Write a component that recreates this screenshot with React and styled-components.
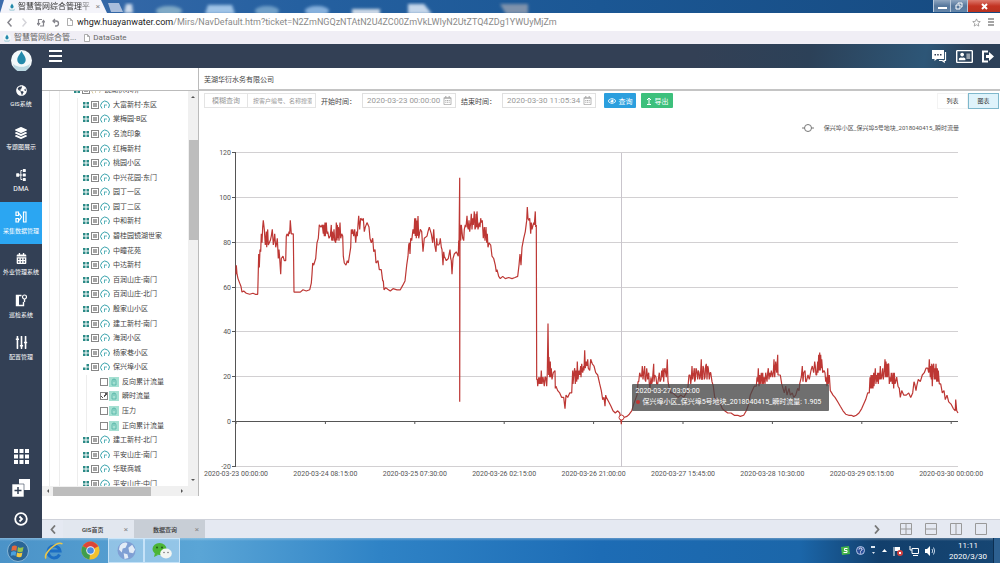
import React, { useState } from "react";
import styled, { createGlobalStyle, css } from "styled-components";
import {
  FaGlobeAmericas,
  FaLayerGroup,
  FaSitemap,
  FaCalendarAlt,
  FaSlidersH,
  FaRegAddressCard,
  FaRegCalendarAlt,
  FaRegEye,
} from "react-icons/fa";

const GlobalStyle = createGlobalStyle`
  * { box-sizing: border-box; }
  body {
    margin: 0;
    background: #fff;
    font-family: Roboto, "Noto Sans CJK SC", sans-serif;
    font-size: 7px;
    color: #444;
  }
  button, input, select {
    font-family: inherit;
    font-size: inherit;
    color: inherit;
    margin: 0;
    padding: 0;
    border: 0;
    background: none;
  }
  svg { display: block; flex: none; }
`;

const Page = styled.div`
  display: flex;
  flex-direction: column;
  height: 100vh;
  overflow: hidden;
`;

/* ---------- browser ---------- */

const TitleBar = styled.div`
  position: relative;
  display: flex;
  align-items: stretch;
  height: 13px;
  overflow: hidden;
  background: linear-gradient(90deg, #3c6cab 0%, #2560a0 30%, #1b5794 60%, #164a80 100%);
`;

const Wallpaper = styled.svg`
  position: absolute;
  left: 106px;
  top: 0;
`;

const BrowserTab = styled.div`
  display: flex;
  align-items: center;
  gap: 2px;
  width: 107px;
  padding: 0 7px 0 8px;
  font-size: 8px;
  color: #333;
  background: #f4f4fa;
  clip-path: polygon(0 100%, 4px 0, 101px 0, 100% 100%);
`;

const TabTitle = styled.span`
  flex: 1;
  white-space: nowrap;
  line-height: 13px;
  mask-image: linear-gradient(90deg, #000 80%, rgba(0, 0, 0, 0.3));
`;

const TabClose = styled.button`
  font-size: 8px;
  line-height: 8px;
  color: #888;
`;

const WindowButtons = styled.div`
  position: relative;
  display: flex;
  margin-left: auto;
  height: 12px;
`;

const WindowButton = styled.button`
  display: flex;
  align-items: center;
  justify-content: center;
  width: ${({ $close }) => ($close ? "33px" : "17px")};
  background: ${({ $close }) =>
    $close
      ? "linear-gradient(#dd7a6d, #c33423 50%, #b93220)"
      : "linear-gradient(#8fa6c0, #56779c 50%, #6485a8)"};
  border-left: 1px solid #b8c8da;
`;

const AddressBar = styled.div`
  display: flex;
  align-items: center;
  height: 18px;
  padding: 0 6px 0 7px;
  background: #fff;
  color: #777;
`;

const NavButton = styled.button`
  display: flex;
  width: 15px;
  color: ${({ disabled }) => (disabled ? "#d5d5da" : "#85858c")};
`;

const Url = styled.div`
  flex: 1;
  margin-left: 4px;
  font-size: 9px;
  line-height: 16px;
  color: #8a8a8a;
  white-space: nowrap;
  b {
    font-weight: 400;
    color: #222;
  }
`;

const BarIcon = styled.button`
  display: flex;
  margin-left: 7px;
  color: #888;
`;

const BookmarkBar = styled.div`
  display: flex;
  align-items: center;
  gap: 8px;
  height: 13px;
  padding-left: 3px;
  background: #f0eef5;
`;

const Bookmark = styled.a`
  display: flex;
  align-items: center;
  gap: 3px;
  font-size: 8px;
  line-height: 13px;
  color: #666;
  text-decoration: none;
`;

/* ---------- application ---------- */

const AppShell = styled.div`
  display: flex;
  flex: 1;
  min-height: 0;
`;

const Sidebar = styled.nav`
  display: flex;
  flex-direction: column;
  width: 42px;
  background: #334055;
  color: #fff;
`;

const Logo = styled.div`
  display: flex;
  align-items: center;
  justify-content: center;
  height: 32px;
`;

const MenuItem = styled.button`
  display: flex;
  flex-direction: column;
  align-items: center;
  justify-content: center;
  gap: 4px;
  height: 42px;
  padding-bottom: 1px;
  color: #fff;
  font-size: ${({ $latin }) => ($latin ? "7px" : "6px")};
  line-height: 8px;
  white-space: nowrap;
  ${({ $active }) =>
    $active &&
    css`
      background: #2ba6f2;
    `}
`;

const SidebarTools = styled.div`
  display: flex;
  flex-direction: column;
  align-items: center;
  gap: 15px;
  margin-top: auto;
  padding-bottom: 12px;
`;

const ToolButton = styled.button`
  display: flex;
  color: #fff;
`;

const Main = styled.div`
  display: flex;
  flex: 1;
  flex-direction: column;
  min-width: 0;
`;

const Header = styled.header`
  display: flex;
  align-items: center;
  gap: 9px;
  height: 24px;
  padding: 0 6px 0 7px;
  color: #fff;
  background: linear-gradient(100deg, #334055 68%, #2c4158 80%, #2d5677 92%, #2c4058 97%);
`;

const Spacer = styled.span`
  flex: 1;
`;

const Workspace = styled.div`
  display: flex;
  flex: 1;
  min-height: 0;
`;

const TreePanel = styled.aside`
  display: flex;
  flex-direction: column;
  width: 157px;
  margin-bottom: 23px;
  border-right: 1px solid #bbb;
`;

const TreeHead = styled.div`
  height: 23px;
  border-bottom: 1px solid #bbb;
`;

const TreeBody = styled.div`
  display: flex;
  flex: 1;
  min-height: 0;
`;

const TreeClip = styled.div`
  display: flex;
  flex: 1;
  min-width: 0;
  overflow: hidden;
`;

const TreeList = styled.ul`
  display: flex;
  flex: 1;
  flex-direction: column;
  margin: -8px 0 -5px;
  padding: 0;
  list-style: none;
`;

const TreeRow = styled.li`
  display: flex;
  flex: 1;
  align-items: center;
  white-space: nowrap;
`;

const Guide = styled.span`
  align-self: stretch;
  width: ${({ $width }) => $width}px;
  border-right: 1px solid ${({ $clear }) => ($clear ? "transparent" : "#ededed")};
`;

const Toggle = styled.button`
  display: flex;
  width: 8px;
`;

const NodeLabel = styled.label`
  display: flex;
  align-items: center;
  gap: 1px;
  line-height: 10px;
  span {
    margin-left: 2px;
  }
`;

const CheckBox = styled.input`
  appearance: none;
  width: 8px;
  height: 8px;
  flex: none;
  border: 1px solid #888;
  background: ${({ $partial }) => ($partial ? "#a5a5a5" : "#fff")};
  ${({ $partial }) =>
    $partial &&
    css`
      box-shadow: inset 0 0 0 1px #fff;
    `}
  &:checked {
    background: no-repeat center / 6px 6px
      conic-gradient(from 20deg at 40% 85%, #555 0 30deg, #fff 0 270deg, #555 0 300deg, #fff 0);
  }
`;

const VScroll = styled.div`
  display: flex;
  flex-direction: column;
  align-items: center;
  justify-content: space-between;
  width: 10px;
  padding: 4px 0;
  background: #f0f0f0;
`;

const VThumb = styled.div`
  width: 9px;
  height: 100px;
  margin: 41px 0 auto;
  background: #bdbdbd;
`;

const HScroll = styled.div`
  display: flex;
  align-items: center;
  height: 10px;
  padding: 0 14px 0 4px;
  background: #f0f0f0;
`;

const HThumb = styled.div`
  width: 98px;
  height: 9px;
  margin: 0 auto 0 3px;
  background: #bdbdbd;
`;

const Content = styled.main`
  flex: 1;
  min-width: 0;
`;

const CompanyName = styled.h1`
  height: 23px;
  margin: 0;
  padding-left: 5px;
  border-bottom: 2px solid #c4c4c4;
  font-size: 7px;
  font-weight: 400;
  line-height: 24px;
  color: #444;
`;

const Toolbar = styled.div`
  display: flex;
  align-items: center;
  height: 21px;
  padding: 0 1px 2px 5px;
`;

const KindSelect = styled.select`
  appearance: none;
  width: 44px;
  height: 15px;
  padding: 0 7px;
  border: 1px solid #e4e4e4;
  color: #999;
`;

const KeywordInput = styled.input`
  width: 68px;
  height: 15px;
  padding: 0 3px 0 5px;
  border: 1px solid #e4e4e4;
  border-left: 0;
  font-size: 6px;
  &::placeholder {
    color: #999;
  }
`;

const FieldLabel = styled.label`
  width: 41px;
  margin-left: 5px;
  white-space: nowrap;
`;

const DateField = styled.div`
  display: flex;
  align-items: center;
  width: 94px;
  height: 15px;
  padding: 0 3px 0 4px;
  border: 1px solid #e0e0e0;
  color: #aaa;
  input {
    flex: 1;
    min-width: 0;
    font-size: 8px;
    color: #999;
  }
`;

const ActionButton = styled.button`
  display: flex;
  align-items: center;
  justify-content: center;
  gap: 3px;
  width: 32px;
  height: 15px;
  margin-left: ${({ $first }) => ($first ? "8px" : "5px")};
  border-radius: 1px;
  color: #fff;
  background: ${({ $color }) => $color};
`;

const ViewButton = styled.button`
  width: 31px;
  height: 16px;
  font-size: 6px;
  color: #333;
  border: 1px solid ${({ $active }) => ($active ? "#7fb8cc" : "#f3f3f3")};
  background: ${({ $active }) => ($active ? "#dff3fb" : "#fff")};
`;

const ChartBox = styled.div`
  position: relative;
`;

const ChartSvg = styled.svg`
  width: 100%;
  height: auto;
  text {
    font-size: 7px;
    fill: #555;
  }
`;

const Tooltip = styled.div`
  position: absolute;
  left: 54%;
  top: 68%;
  padding: 2px 8px 3px 4px;
  border-radius: 1px;
  line-height: 11px;
  white-space: nowrap;
  color: #fff;
  background: rgba(70, 70, 70, 0.78);
`;

const SeriesDot = styled.span`
  display: inline-block;
  width: 4px;
  height: 4px;
  margin-right: 3px;
  border-radius: 50%;
  background: #c23531;
`;

const PageTabs = styled.footer`
  display: flex;
  align-items: center;
  height: 19px;
  padding-right: 13px;
  border-top: 1px solid #cfd2da;
  background: #e5e9f2;
  color: #777;
`;

const TabArrow = styled.button`
  display: flex;
  justify-content: center;
  width: 21px;
`;

const PageTab = styled.div`
  display: flex;
  align-items: center;
  align-self: stretch;
  width: 71px;
  padding: 0 6px 0 19px;
  background: ${({ $active }) => ($active ? "#c8ced6" : "#e2e7ef")};
`;

const TabName = styled.button`
  color: #333;
  font-size: 6px;
  font-weight: 500;
  white-space: nowrap;
`;

const TabRemove = styled.button`
  margin-left: auto;
  font-size: 8px;
  color: #888;
`;

const LayoutButton = styled.button`
  display: flex;
  margin-left: 13px;
`;

/* ---------- task bar ---------- */

const TaskBar = styled.div`
  display: flex;
  align-items: stretch;
  height: 25px;
  color: #fff;
  background:
    linear-gradient(rgba(255, 255, 255, 0.3), transparent 3px),
    linear-gradient(90deg, #4b93c8 0%, #5aa5d6 20%, #2f83c6 38%, #1d6cb5 60%, #1b66a9 80%, #123f6c 88%, #164673 100%);
`;

const TaskButton = styled.button`
  display: flex;
  align-items: center;
  justify-content: center;
  width: 36px;
  ${({ $open }) =>
    $open &&
    css`
      border: 1px solid rgba(220, 240, 255, 0.7);
      background: rgba(220, 240, 255, 0.45);
    `}
`;

const Tray = styled.div`
  display: flex;
  align-items: center;
  gap: 6px;
  margin-left: auto;
`;

const Clock = styled.time`
  width: 42px;
  margin: 0 5px 0 6px;
  font-size: 8px;
  line-height: 11px;
  text-align: center;
`;

const ShowDesktop = styled.button`
  align-self: stretch;
  width: 7px;
  margin-left: -7px;
  border-left: 1px solid #0c2f52;
  background: #2d6090;
`;

/* ---------- data ---------- */

const nodes = [
  "大富新村-东区",
  "棠梅园-B区",
  "名流印象",
  "红梅新村",
  "桃园小区",
  "中兴花园-东门",
  "园丁一区",
  "园丁二区",
  "中和新村",
  "碧桂园镜湖世家",
  "中疃花苑",
  "中达新村",
  "百润山庄-南门",
  "百润山庄-北门",
  "殷家山小区",
  "建工新村-南门",
  "海润小区",
  "杨家巷小区",
  {
    name: "保兴埠小区",
    children: ["反向累计流量", "瞬时流量", "压力", "正向累计流量"],
  },
  "建工新村-北门",
  "平安山庄-南门",
  "华联商城",
  "平安山庄-中门",
];

const SERIES = "保兴埠小区_保兴埠5号地块_2018040415_瞬时流量";

const xLabels = [
  "2020-03-23 00:00:00",
  "2020-03-24 08:15:00",
  "2020-03-25 07:30:00",
  "2020-03-26 02:15:00",
  "2020-03-26 21:00:00",
  "2020-03-27 15:45:00",
  "2020-03-28 10:30:00",
  "2020-03-29 05:15:00",
  "2020-03-30 00:00:00",
];

// samples as "position value" pairs, each block counts from its own offset
const blocks = [
  {
    offset: -107,
    data: `107 66 108 70 110 66 113 64 118 62 122 60.5 125 58 130 58.5 138 57.5 148 57 158 57.5 165 57 172 57
    173 62 175 75 177 69 179 77 181 76 183 84 185 80 187 87 189 90 192 86 195 79 198 85 199 78 202 86 204 79
    210 81 213 83 216 86 219 79 221 81 223 84 226 78 229 80 231 82 234 73 236 77 238 73 241 66 243 73 248 74 252 72 256 72
    258 83 260 84 264 83 266 85 268 84 270 90 273 84 279 84 281 58 290 58 300 58 308 59 318 58.5 328 59 333 62 335 66
    337 71 340 70 346 73 350 80 354 82 357 88 362 87 366 88 369 84 370 88 372 83 374 89 375 83 378 89 380 84 382 85
    386 82 390 83 393 88 394 81 396 85 398 81 401 86 403 81 406 80 408 89 410 81 411 88 413 82 414 87 416 81 419 89
    421 82 424 84 427 83 429 74 432 71 437 70 441 72 444 71 448 75 451 78 453 86 455 84 457 86 460 83 463 86 466 80
    469 85 471 83 473 88 475 92 478 86 481 91 486 90 489 91 492 85 495 87 500 89 506 87 509 82 513 80 517 82 520 76
    524 77 527 71 533 72 537 68 543 68 547 63 549 63 551 59 556 60 562 59.3 570 58.5 578 59.5 590 59 600 59 607 61
    614 63 619 70 623 74 625 79 627 80 629 75 631 82 634 81 638 86 641 84 643 91 645 83 646 91 648 82 650 90 651 83
    653 92 655 82 660 86 664 85 668 76 672 82 680 83 683 85 687 87 693 84 697 80 700 86 703 79 707 76 709 82 711 79
    715 79 718 80`,
  },
  {
    offset: 613,
    data: `0 82 3 78 5 77 8 70 10 76 12 74 18 72 24 73 29 77 31 73 33 72 35 66 38 73 42 75 48 76 54 74 55 81 56 78
    58 109 58 9 59 88 61 81 63 88 67 82 70 81 72 86 75 88 77 87 80 92 82 87 84 86 86 90 88 85 91 89 93 93 95 86
    97 91 99 88 102 94 104 86 106 87 107 93 109 87 110 94 113 86 117 89 119 87 121 91 123 89 126 90 129 82 132 87
    134 81 137 87 139 80 141 84 143 78 146 80 151 79 155 74 160 73 165 70 168 67 170 68 175 65 180 64 187 65 195 64
    205 64.5 215 64 224 64.5 232 65 236 70 239 75 242 70 245 78 250 82 255 85 259 90 261 96 263 91 265 90 268 91
    271 84 273 89 275 86 280 89 282 88 285 94 286 87 288 88 289 19 291 19 292 16 295 20 297 17 299 20 301 17 303 23
    305 17 308 20 312 16 314 20 316 20 319 16 321 22 323 44 325 21 326 29 328 20 330 27 331 20 333 24 335 19 339 22
    344 23 345 15 347 16 352 14 358 13 364 11 370 11 374 6 377 12 382 11 388 13 394 13 397 23 398 17 401 22 403 24
    405 17 407 23 409 18 411 27 413 19 416 23 418 21 421 25 422 20 424 26 427 22 430 25 431 23 433 32 435 24 438 27
    440 25 442 28 444 24 448 23 451 28 456 26 461 25 466 22 472 21 478 17 483 14 487 10 491 11 494 7 496 12 498 11
    505 9 512 7 518 5 525 4 532 5 538 4 541 2 543 -1 545 3`,
  },
  {
    offset: 1123,
    data: `35 2 40 2 50 2.5 57 3.5 64 5 70 8 75 10 80 12 83 18 85 18 88 22 92 20 94 21 96 25 98 19 100 22 103 25 104 19
    106 18 109 24 112 19 115 22 117 17 119 15 122 20 124 17 126 18 130 26 131 18 133 21 137 20 139 17 142 17 147 22
    149 18 152 19 154 23 156 20 158 24 160 18 162 23 164 24 168 20 171 28 173 18 177 15 181 13 187 13 195 12 203 11
    212 12 220 11 228 13 231 13 233 16 236 21 239 21 241 17 243 19 245 25 247 19 250 22 252 24 253 18 255 19 257 24
    259 23 262 19 264 23 266 22 268 19 270 20 273 28 274 19 276 19 278 25 280 24 282 19 284 20 286 25 288 26 290 19
    292 25 294 24 297 19 299 22 301 22 305 18 309 16 313 11 318 10 324 9 331 8 336 6 343 5 352 4 362 4 372 3 382 3
    390 2.5 400 3 408 5 413 7 420 12 426 14 432 16 438 16 440 20 442 18 444 24 446 16 448 21 450 17 453 22 455 17
    457 22 459 17 461 20 464 17 466 22 470 18 472 22 474 24 476 19 478 22 481 20 483 23 487 20 489 22 491 28 493 20
    496 27 499 22 502 30 503 21 505 21 510 21 514 17 518 15 522 13 526 16 530 12 536 15 540 12 546 13 550 11 556 12
    562 15 566 14 568 17 573 20 576 25 578 18 580 22 584 23 586 18 588 18 593 21 597 19 602 23 606 25 610 22 613 27
    615 25 617 21 619 21 622 27 623 22 625 30 627 23 628 31 630 23 631 30 633 24 634 28 637 22 641 23 644 22 646 18
    648 20 650 16 652 24 654 17 657 21 660 14 664 13 668 12 674 11 682 9 690 7 698 5 706 3.5 715 3 723 3 730 2.5
    738 3 746 4 754 6 760 8 766 10 772 13 777 13 779 20 781 15 782 21 784 15 786 21 788 15 790 22 791 16 793 20
    795 24 797 17 798 21 800 18 802 22 804 17 806 22 808 19 810 25 812 19 814 20 817 24 819 19 821 21 824 28 826 20
    827 27 829 20 830 26 832 20 834 26 835 26 837 17 839 20 841 18 843 22 846 17 848 22 850 15 852 22 854 17 856 18
    859 20 863 16 867 15 870 11 874 14 880 12 888 12 895 13 901 11 907 13 911 18 913 17 917 14 919 16 924 19 930 18
    936 21 942 22 947 24 952 24 955 22 957 28 960 20 961 25 963 19 964 26 966 16 968 25 970 26 972 19 973 24 975 19
    977 26 979 18 981 24 983 18 984 23 987 17 991 17 996 13 1001 14 1005 10 1010 12 1015 9 1022 8 1029 6 1035 5
    1036 10 1039 5 1043 4`,
  },
];

const PLOT = { left: 37, right: 759, zero: 310, unit: 2.24 };
const toY = (value) => PLOT.zero - value * PLOT.unit;

const linePoints = blocks
  .map(({ offset, data }) => {
    const n = data.trim().split(/\s+/).map(Number);
    const out = [];
    for (let i = 0; i < n.length; i += 2) {
      const x = PLOT.left + (n[i] + offset) / 3;
      out.push(`${x.toFixed(1)},${toY(n[i + 1]).toFixed(1)}`);
    }
    return out.join(" ");
  })
  .join(" ");

/* ---------- icons ---------- */

const DropIcon = ({ size }) => (
  <svg width={size} height={size} viewBox="0 0 20 20">
    <circle cx="10" cy="10" r="10" fill="#f3f8fa" />
    <path d="M2 13a8 8 0 0 0 16 0c-4 4-12 4-16 0z" fill="#bcd9e3" />
    <path d="M10 1c2 4 4 5.500 4 8.500a4 4 0 0 1-8 0C6 6.500 8 5 10 1z" fill="#2389ab" />
  </svg>
);

const FileIcon = () => (
  <svg width="6" height="8" viewBox="0 0 6 8" fill="#fff" stroke="#999">
    <path d="M.5.5h3l2 2v5h-5z M3.500 .5v2h2" strokeWidth=".8" />
  </svg>
);

const DataIcon = () => (
  <svg width="12" height="12" viewBox="0 0 12 12" fill="none" stroke="#fff" strokeWidth="1.200">
    <path d="M1 1h2.500v3.500H1z M1 7.500h2.500V11H1z M3.500 2.500c2 0 2 3.500 3.500 3.500-1.500 0-1.500 3.500-3.500 3.500M8.500 1H11v10H8.500z" />
  </svg>
);

const PatrolIcon = () => (
  <svg width="12" height="13" viewBox="0 0 12 13" fill="none" stroke="#fff">
    <path d="M6.500 1.500h-5v10h7V8" strokeWidth="1.400" />
    <path d="M1 1h3v11H1z" fill="#fff" strokeWidth="0" />
    <circle cx="9.500" cy="3" r="2" strokeWidth="1.200" />
    <path d="M9.500 5v3" strokeWidth="1.400" />
  </svg>
);

const ExitIcon = () => (
  <svg width="12" height="13" viewBox="0 0 12 13">
    <path d="M6 1.500H1v10h5" fill="none" stroke="#fff" strokeWidth="2" />
    <path d="M4 5h3V2l5 4.500L7 11V8H4z" fill="#fff" />
  </svg>
);

const ClusterIcon = ({ open }) => (
  <svg width="6" height="6" viewBox="0 0 6 6" fill="#2b8a86">
    {!open && <path d="M0 0h2.500v2.500H0z" />}
    <path d="M3.500 0H6v2.500H3.500z M0 3.500h2.500V6H0z M3.500 3.500H6V6H3.500z" />
  </svg>
);

const GaugeIcon = ({ color = "#3aa3ac" }) => (
  <svg width="10" height="10" viewBox="0 0 10 10" fill="none" stroke={color}>
    <path d="M2 8.500A4.300 4.300 0 1 1 8.500 8" />
    <path d="M4 5h3M4.500 5v3" strokeWidth=".8" />
  </svg>
);

const MeterIcon = () => (
  <svg width="10" height="10" viewBox="0 0 10 10">
    <path d="M0 0h10v10H0z" fill="#a5e0d2" />
    <path d="M3 8V4a2 2 0 0 1 4 0v4z M5 2v3" fill="none" stroke="#4fb3a5" strokeWidth=".8" />
  </svg>
);

const LayoutIcon = ({ d }) => (
  <svg width="12" height="12" viewBox="0 0 12 12" fill="none" stroke="#999">
    <path d={`M.5.5h11v11H.5z ${d}`} />
  </svg>
);

const Arrow = ({ d }) => (
  <svg width="4" height="4" viewBox="0 0 4 4" fill="#555">
    <path d={d} />
  </svg>
);

const ChromeIcon = () => (
  <svg width="19" height="19" viewBox="0 0 20 20">
    <circle cx="10" cy="10" r="9.500" fill="#f2c12e" />
    <path d="M10 10L1.800 5.200A9.500 9.500 0 0 1 18.200 5.500z" fill="#dc4437" />
    <path d="M10 10L1.800 5.200a9.500 9.500 0 0 0 7 14.200z" fill="#3f9d4b" />
    <circle cx="10" cy="10" r="4.500" fill="#f5f5f5" />
    <circle cx="10" cy="10" r="3.500" fill="#4a8ce0" />
  </svg>
);

const WindowsIcon = () => (
  <svg width="22" height="22" viewBox="0 0 22 22">
    <circle cx="11" cy="11" r="10.500" fill="#2a6596" stroke="#86b5d6" />
    <path d="M5 6.500c2-1.200 3.500-1.200 5 0L9.300 11c-1.500-1-3-1-5 0z" fill="#e4683a" />
    <path d="M11 7c2 1.200 3.500 1 5.500 0l-.8 4.500c-2 1-3.700 1-5.400 0z" fill="#96c34a" />
    <path d="M4.200 12c2-1 3.500-1 5 0l-.7 4c-1.500-1-3-1-4.800 0z" fill="#4ba1dc" />
    <path d="M10 12.500c2 1 3.500 1 5.400 0l-.8 4c-2 1.200-3.500 1-5.200 0z" fill="#f3c73f" />
  </svg>
);

const IeIcon = () => (
  <svg width="20" height="20" viewBox="0 0 20 20" fill="none">
    <path d="M15.500 13.500A6 6 0 1 1 16 10H6" stroke="#1d6fc4" strokeWidth="3" />
    <path d="M2 17.500C-1 13 13-1 18.500 3" stroke="#e9c54a" strokeWidth="1.500" />
  </svg>
);

const GlobeIcon = () => (
  <svg width="19" height="19" viewBox="0 0 20 20">
    <circle cx="10" cy="10" r="9.500" fill="#7f9fd4" />
    <path d="M3 5c3-4 7-4 8-2l-2 4-3 1-1 4-3-3zM12 7l4-3 3 5-2 4-4-1zM7 13l4 1 1 4-4 1z" fill="#e3ecf7" />
  </svg>
);

const WechatIcon = () => (
  <svg width="20" height="18" viewBox="0 0 20 18">
    <ellipse cx="7.500" cy="7" rx="7" ry="6" fill="#4cb536" />
    <path d="M3 11l-1 4 4-2z" fill="#4cb536" />
    <ellipse cx="14" cy="11.500" rx="5.800" ry="5" fill="#f2f5f2" />
    <circle cx="5" cy="5.500" r="1" fill="#23591a" />
    <circle cx="10" cy="5.500" r="1" fill="#23591a" />
    <circle cx="12" cy="10.500" r=".8" fill="#777" />
    <circle cx="16" cy="10.500" r=".8" fill="#777" />
  </svg>
);

const TreeMapIcon = styled(FaSitemap)`
  transform: rotate(-90deg);
`;

const SlidersIcon = styled(FaSlidersH)`
  transform: rotate(90deg);
`;

const menu = [
  { label: "GIS系统", icon: <FaGlobeAmericas size={11} /> },
  { label: "专题图展示", icon: <FaLayerGroup size={12} /> },
  { label: "DMA", icon: <TreeMapIcon size={12} />, latin: true },
  { label: "采集数据管理", icon: <DataIcon />, active: true },
  { label: "外业管理系统", icon: <FaCalendarAlt size={11} /> },
  { label: "巡检系统", icon: <PatrolIcon /> },
  { label: "配置管理", icon: <SlidersIcon size={13} /> },
];

/* ---------- parts ---------- */

const Browser = () => (
  <>
    <TitleBar>
      <Wallpaper width="600" height="13" viewBox="0 0 600 13">
        <defs>
          <filter id="soft">
            <feGaussianBlur stdDeviation="1.500" />
          </filter>
        </defs>
        <path d="M2 3h11l4 9H5z" fill="#a9bddb" />
        <g filter="url(#soft)">
          <path d="M18 13l2-9h6l1 9z" fill="#cfdcec" />
          <ellipse cx="63" cy="11" rx="13" ry="5" fill="#7fa9c6" />
          <path d="M99 14l3-9h24l3 9z" fill="#9fc3e6" />
          <ellipse cx="161" cy="11" rx="12" ry="5" fill="#6f9fc8" />
          <ellipse cx="211" cy="11" rx="12" ry="5" fill="#86b0dc" />
          <path d="M246 9h28v6h-28z" fill="#cdd9e6" />
          <path d="M302 4h16l8 10h-24z" fill="#c4d6ea" />
          <path d="M394 4h28v10h-22z" fill="#7e92ac" />
        </g>
      </Wallpaper>
      <BrowserTab>
        <DropIcon size={8} />
        <TabTitle>智慧管网综合管理平</TabTitle>
        <TabClose aria-label="关闭标签页">×</TabClose>
      </BrowserTab>
      <WindowButtons>
        <WindowButton aria-label="最小化">
          <svg width="9" height="8"><path d="M0 5h9v2H0z" fill="#fff" /></svg>
        </WindowButton>
        <WindowButton aria-label="还原">
          <svg width="8" height="8" fill="none" stroke="#fff"><path d="M3 2V1h4v4H6M1 3h4v4H1z" /></svg>
        </WindowButton>
        <WindowButton $close aria-label="关闭">
          <svg width="7" height="7" stroke="#fff" strokeWidth="2"><path d="M1 1l5 5M6 1L1 6" /></svg>
        </WindowButton>
      </WindowButtons>
    </TitleBar>
    <AddressBar>
      <NavButton aria-label="后退">
        <svg width="5" height="9" fill="none" stroke="currentColor" strokeWidth="1.500"><path d="M4.500 .5L1 4.500l3.500 4" /></svg>
      </NavButton>
      <NavButton disabled aria-label="前进">
        <svg width="5" height="9" fill="none" stroke="currentColor" strokeWidth="1.500"><path d="M.5.5L4 4.500l-3.500 4" /></svg>
      </NavButton>
      <NavButton aria-label="刷新">
        <svg width="8" height="9" fill="none" stroke="currentColor" strokeWidth="1.200"><path d="M5 1.500H1.500V6M0 5l1.500 2L3 5M3 8h3.500V3M5 4.500l1.500-2 1.500 2" /></svg>
      </NavButton>
      <NavButton aria-label="撤销">
        <svg width="8" height="9" fill="none" stroke="currentColor" strokeWidth="1.300"><path d="M3 1L1 3l2 2M1 3h3a2.500 2.500 0 0 1 0 5H3" /></svg>
      </NavButton>
      <FileIcon />
      <Url>
        <b>whgw.huayanwater.com</b>/Mirs/NavDefault.htm?ticket=N2ZmNGQzNTAtN2U4ZC00ZmVkLWIyN2UtZTQ4ZDg1YWUyMjZm
      </Url>
      <BarIcon aria-label="收藏">
        <svg width="9" height="9" viewBox="0 0 10 10" fill="none" stroke="currentColor" strokeWidth=".8"><path d="M5 1l1.200 2.700 3 .3-2.300 2 .7 3L5 7.500 2.400 9l.7-3L.8 4l3-.3z" /></svg>
      </BarIcon>
      <BarIcon aria-label="菜单">
        <svg width="6" height="8" stroke="currentColor" strokeWidth="1.400"><path d="M0 1h6M0 4h6M0 7h6" /></svg>
      </BarIcon>
    </AddressBar>
    <BookmarkBar>
      <Bookmark href="#home">
        <DropIcon size={8} />
        智慧管网综合管...
      </Bookmark>
      <Bookmark href="#datagate">
        <FileIcon />
        DataGate
      </Bookmark>
    </BookmarkBar>
  </>
);

const Tree = () => {
  const [checked, setChecked] = useState(["瞬时流量"]);

  const toggle = (name) => {
    setChecked(checked.includes(name) ? checked.filter((c) => c !== name) : [...checked, name]);
  };

  return (
    <TreeList>
      <TreeRow>
        <Guide $width={8} />
        <Guide $width={10} />
        <Guide $width={14} $clear />
        <Toggle aria-label="镜湖供水所"><ClusterIcon /></Toggle>
        <NodeLabel>
          <CheckBox type="checkbox" $partial />
          <GaugeIcon color="#d8c9a0" />
          <span>镜湖供水所</span>
        </NodeLabel>
      </TreeRow>
      {nodes.map((node) => {
        const name = node.name || node;
        return (
          <React.Fragment key={name}>
            <TreeRow>
              <Guide $width={8} />
              <Guide $width={10} />
              <Guide $width={18} />
              <Guide $width={5} $clear />
              <Toggle aria-label={name}><ClusterIcon open={!!node.children} /></Toggle>
              <NodeLabel>
                <CheckBox type="checkbox" $partial />
                <GaugeIcon />
                <span>{name}</span>
              </NodeLabel>
            </TreeRow>
            {node.children &&
              node.children.map((child) => (
                <TreeRow key={child}>
                  <Guide $width={8} />
                  <Guide $width={10} />
                  <Guide $width={18} />
                  <Guide $width={9} />
                  <Guide $width={13} $clear />
                  <NodeLabel>
                    <CheckBox
                      type="checkbox"
                      checked={checked.includes(child)}
                      onChange={() => toggle(child)}
                    />
                    <MeterIcon />
                    <span>{child}</span>
                  </NodeLabel>
                </TreeRow>
              ))}
          </React.Fragment>
        );
      })}
    </TreeList>
  );
};

const Chart = () => (
  <ChartBox>
    <ChartSvg viewBox="0 0 801 400">
      <path d="M603 16h12" stroke="#777" />
      <circle cx="609" cy="16" r="3.500" fill="#fff" stroke="#777" />
      <text x="760" y="18" textAnchor="end" style={{ fontSize: 6 }}>{SERIES}</text>
      {[120, 100, 80, 60, 40, 20, 0, -20].map((v) => (
        <g key={v}>
          <path
            d={`M${PLOT.left} ${Math.round(toY(v)) - 0.5}H${PLOT.right}`}
            stroke={v === 0 ? "#555" : "#d2d0d2"}
          />
          <path d={`M${PLOT.left - 4} ${Math.round(toY(v)) - 0.5}h4`} stroke="#555" />
          <text x={PLOT.left - 5} y={Math.round(toY(v)) + 2} textAnchor="end">{v}</text>
        </g>
      ))}
      <path d="M36.500 41V355" stroke="#555" />
      {xLabels.map((label, i) => {
        const x = PLOT.left + i * 89.4;
        return (
          <g key={label}>
            <path d={`M${x} 310v2`} stroke="#555" />
            <text x={x} y="364" textAnchor="middle">{label}</text>
          </g>
        );
      })}
      <path d="M422.500 41V355" stroke="#c9c5cc" />
      <polyline points={linePoints} fill="none" stroke="#bd3734" strokeWidth="1.200" strokeLinejoin="bevel" />
      <circle cx="422.500" cy="305.500" r="2.500" fill="#fff" stroke="#c23531" />
    </ChartSvg>
    <Tooltip>
      2020-03-27 03:05:00
      <br />
      <SeriesDot />
      {SERIES}: 1.905
    </Tooltip>
  </ChartBox>
);

const App = () => {
  const [view, setView] = useState("图表");

  return (
    <Page>
      <GlobalStyle />
      <Browser />
      <AppShell>
        <Sidebar>
          <Logo><DropIcon size={21} /></Logo>
          {menu.map((item) => (
            <MenuItem key={item.label} $active={item.active} $latin={item.latin}>
              {item.icon}
              {item.label}
            </MenuItem>
          ))}
          <SidebarTools>
            <ToolButton aria-label="应用">
              <svg width="15" height="15" fill="currentColor">
                <path d="M0 0h4v4H0zM5.500 0h4v4h-4zM11 0h4v4h-4zM0 5.500h4v4H0zM5.500 5.500h4v4h-4zM11 5.500h4v4h-4zM0 11h4v4H0zM5.500 11h4v4h-4zM11 11h4v4h-4z" />
              </svg>
            </ToolButton>
            <ToolButton aria-label="新增窗口">
              <svg width="18" height="18">
                <path d="M7 0h11v11H7z" fill="#fff" />
                <path d="M0 5h12v13H0z" fill="#fff" stroke="#334055" strokeWidth=".6" />
                <path d="M6 8v7M2.500 11.500h7" stroke="#334055" strokeWidth="1.500" />
              </svg>
            </ToolButton>
            <ToolButton aria-label="展开">
              <svg width="14" height="14" fill="none" stroke="currentColor" strokeWidth="1.800">
                <circle cx="7" cy="7" r="5.800" />
                <path d="M5.500 4.500L8 7 5.500 9.500" />
              </svg>
            </ToolButton>
          </SidebarTools>
        </Sidebar>
        <Main>
          <Header>
            <ToolButton aria-label="菜单">
              <svg width="13" height="12" fill="currentColor"><path d="M0 0h13v2H0zM0 5h13v2H0zM0 10h13v2H0z" /></svg>
            </ToolButton>
            <Spacer />
            <ToolButton aria-label="消息">
              <svg width="15" height="14" viewBox="0 0 15 14">
                <path d="M0 1h12v9H5l-2.500 2V10H0z" fill="#fff" />
                <path d="M13.500 3v8.500h-1.300v1.500l-2-1.500H7" fill="none" stroke="#fff" strokeWidth="1.200" />
                <path d="M2.500 5h1.500v1.500H2.500zM5.200 5h1.500v1.500H5.200zM8 5h1.500v1.500H8z" fill="#334055" />
              </svg>
            </ToolButton>
            <ToolButton aria-label="用户"><FaRegAddressCard size={17} /></ToolButton>
            <ToolButton aria-label="退出"><ExitIcon /></ToolButton>
          </Header>
          <Workspace>
            <TreePanel>
              <TreeHead />
              <TreeBody>
                <TreeClip><Tree /></TreeClip>
                <VScroll>
                  <Arrow d="M0 3h4L2 1z" />
                  <VThumb />
                  <Arrow d="M0 1h4L2 3z" />
                </VScroll>
              </TreeBody>
              <HScroll>
                <Arrow d="M3 0v4L1 2z" />
                <HThumb />
                <Arrow d="M1 0v4l2-2z" />
              </HScroll>
            </TreePanel>
            <Content>
              <CompanyName>芜湖华衍水务有限公司</CompanyName>
              <Toolbar>
                <KindSelect aria-label="查询方式" defaultValue="模糊查询">
                  <option>模糊查询</option>
                </KindSelect>
                <KeywordInput aria-label="关键字" placeholder="按客户编号、名称搜索" />
                <FieldLabel htmlFor="start">开始时间：</FieldLabel>
                <DateField>
                  <input id="start" defaultValue="2020-03-23 00:00:00" />
                  <FaRegCalendarAlt size={9} />
                </DateField>
                <FieldLabel htmlFor="end">结束时间：</FieldLabel>
                <DateField>
                  <input id="end" defaultValue="2020-03-30 11:05:34" />
                  <FaRegCalendarAlt size={9} />
                </DateField>
                <ActionButton $first $color="#2b9fde">
                  <FaRegEye size={8} />
                  查询
                </ActionButton>
                <ActionButton $color="#3dc07c">
                  <svg width="6" height="8" fill="none" stroke="#fff"><path d="M3 7V1M1 3l2-2 2 2M1 7.500h4" /></svg>
                  导出
                </ActionButton>
                <Spacer />
                {["列表", "图表"].map((name) => (
                  <ViewButton key={name} $active={view === name} onClick={() => setView(name)}>
                    {name}
                  </ViewButton>
                ))}
              </Toolbar>
              <Chart />
            </Content>
          </Workspace>
          <PageTabs>
            <TabArrow aria-label="向左">
              <svg width="6" height="9" fill="none" stroke="currentColor" strokeWidth="1.800"><path d="M5 .5L1.500 4.500l3.500 4" /></svg>
            </TabArrow>
            <PageTab>
              <TabName>GIS首页</TabName>
              <TabRemove aria-label="关闭">×</TabRemove>
            </PageTab>
            <PageTab $active>
              <TabName>数据查询</TabName>
              <TabRemove aria-label="关闭">×</TabRemove>
            </PageTab>
            <Spacer />
            <TabArrow aria-label="向右">
              <svg width="6" height="9" fill="none" stroke="currentColor" strokeWidth="1.800"><path d="M1 .5l3.500 4L1 8.500" /></svg>
            </TabArrow>
            <LayoutButton aria-label="四格"><LayoutIcon d="M6 0v12M0 6h12" /></LayoutButton>
            <LayoutButton aria-label="上下"><LayoutIcon d="M0 6h12" /></LayoutButton>
            <LayoutButton aria-label="左右"><LayoutIcon d="M6 0v12" /></LayoutButton>
            <LayoutButton aria-label="单格"><LayoutIcon d="" /></LayoutButton>
          </PageTabs>
        </Main>
      </AppShell>
      <TaskBar>
        <TaskButton aria-label="开始"><WindowsIcon /></TaskButton>
        <TaskButton aria-label="Internet Explorer"><IeIcon /></TaskButton>
        <TaskButton aria-label="Chrome"><ChromeIcon /></TaskButton>
        <TaskButton $open aria-label="浏览器"><GlobeIcon /></TaskButton>
        <TaskButton $open aria-label="微信"><WechatIcon /></TaskButton>
        <Tray>
          <svg width="9" height="9"><path d="M0 1l8-1 1 8-8 1z" fill="#45b649" /><path d="M6.500 2.500h-3v2h2.500v2H2.500" fill="none" stroke="#fff" /></svg>
          <svg width="9" height="9" fill="none" stroke="#fff"><circle cx="4.500" cy="4.500" r="4" fill="#2c4f9a" stroke="#b4c6e6" /><path d="M3 3.500c0-2 3-2 3 0 0 1-1.500 1-1.500 2M4.500 6.500v1" /></svg>
          <svg width="5" height="9" fill="#dfe8f2"><path d="M0 0h4v2H0zM1 6h3L2.500 8z" /></svg>
          <svg width="5" height="4" fill="#fff"><path d="M0 3h5L2.500 0z" /></svg>
          <svg width="10" height="10"><path d="M1 1v9" stroke="#fff" /><path d="M2 1h5v4H2z" fill="#fff" /><circle cx="7" cy="7" r="3" fill="#cf4040" /><path d="M6 6l2 2M8 6L6 8" stroke="#fff" /></svg>
          <svg width="10" height="10" fill="none" stroke="#fff"><path d="M3 2.500h6.500v5H3zM4 9.500h5M1 0v4h2" /></svg>
          <svg width="10" height="10" fill="#fff"><path d="M0 3h2l3-3v10L2 7H0z" /><path d="M7 3q1.500 2 0 4M8.500 1.500q2.500 3.500 0 7" fill="none" stroke="#c4d6e8" /></svg>
          <Clock>
            11:11
            <br />
            2020/3/30
          </Clock>
          <ShowDesktop aria-label="显示桌面" />
        </Tray>
      </TaskBar>
    </Page>
  );
};

export default App;
